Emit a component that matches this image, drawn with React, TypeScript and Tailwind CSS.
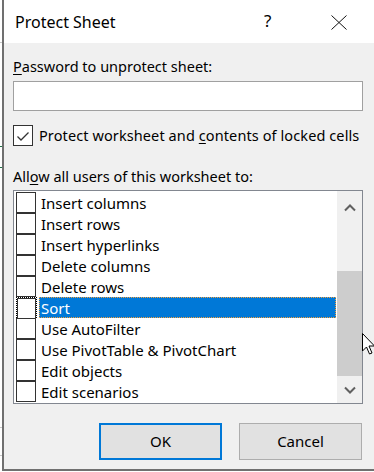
import React from "react";

const items = [
  "Insert columns",
  "Insert rows",
  "Insert hyperlinks",
  "Delete columns",
  "Delete rows",
  "Sort",
  "Use AutoFilter",
  "Use PivotTable & PivotChart",
  "Edit objects",
  "Edit scenarios",
];

function Check() {
  return (
    <svg width="16" height="16" viewBox="0 0 16 16" fill="none">
      <path d="M2.5 8.5 L6 12 L13.5 4.5" stroke="#333" strokeWidth="1.3" />
    </svg>
  );
}

function Chevron({ down }: { down?: boolean }) {
  return (
    <svg width="12" height="8" viewBox="0 0 12 8" fill="none">
      <path
        d={down ? "M1 1.5 L6 6.5 L11 1.5" : "M1 6.5 L6 1.5 L11 6.5"}
        stroke="#606060"
        strokeWidth="2"
      />
    </svg>
  );
}

export default function App() {
  return (
    <div
      className="relative w-[374px] h-[472px] overflow-hidden bg-white flex text-[#000]"
      style={{ fontFamily: '"Noto Sans", "Open Sans", sans-serif' }}
    >
      {/* spreadsheet strip behind dialog */}
      <div className="relative w-[2px] shrink-0 bg-white">
        <div className="absolute left-0 top-[42px] w-[2px] h-px bg-[#c8c8c8]" />
        <div className="absolute left-0 top-[146px] w-[2px] h-px bg-[#217346]" />
        <div className="absolute left-0 top-[167px] w-[2px] h-px bg-[#217346]" />
        <div className="absolute left-0 top-[427px] w-[2px] h-px bg-[#c8c8c8]" />
        <div className="absolute left-0 top-[455px] w-[2px] h-px bg-[#c8c8c8]" />
      </div>

      <div className="flex flex-col w-[400px] h-[471px] shrink-0 border-l-2 border-b-2 border-[#707070] bg-[#f0f0f0]">
        {/* title bar */}
        <div className="relative h-[43px] bg-white flex items-center shrink-0">
          <span className="ml-[11px] text-[16px] leading-none">Protect Sheet</span>
          <span className="absolute left-[260px] top-[12px] text-[17px] leading-none">?</span>
          <svg className="absolute left-[327px] top-[15px]" width="16" height="15" viewBox="0 0 16 15">
            <path d="M0.5 0.5 L15.5 14.5 M15.5 0.5 L0.5 14.5" stroke="#111" strokeWidth="1" />
          </svg>
        </div>

        {/* body */}
        <div className="pl-[9px] w-[359px] flex flex-col text-[14.5px]">
          <div className="mt-[13px] h-[21px] leading-[21px]">
            <span className="underline underline-offset-2">P</span>assword to unprotect sheet:
          </div>
          <div className="mt-[4px] h-[30px] bg-white border border-[#a0a0a0]" />

          <div className="mt-[14px] flex items-center h-[21px] whitespace-nowrap">
            <div className="w-[20px] h-[21px] shrink-0 border border-[#333] bg-white flex items-center justify-center">
              <Check />
            </div>
            <span className="ml-[6px] leading-[21px] tracking-[0.1px]">
              Protect worksheet and <span className="underline underline-offset-2">c</span>ontents of locked cells
            </span>
          </div>

          <div className="mt-[20px] h-[21px] leading-[21px]">
            All<span className="underline underline-offset-2">o</span>w all users of this worksheet to:
          </div>

          {/* list box */}
          <div className="mt-[3px] h-[214px] border border-[#828790] bg-white flex text-[15px]">
            <div className="flex-1 flex flex-col pt-px pl-[2px]">
              {items.map((label) => {
                const sel = label === "Sort";
                return (
                  <div key={label} className="h-[21px] flex items-start">
                    <div
                      className={
                        sel
                          ? "w-[21px] h-[21px] border border-dotted border-black flex"
                          : "w-[21px] h-[21px] flex"
                      }
                    >
                      <div className="w-[20px] h-[21px] border border-[#333] bg-white" />
                    </div>
                    <div
                      className={
                        sel
                          ? "ml-[2px] flex-1 h-[21px] leading-[21px] pl-[1px] bg-[#0078d7] text-white border border-dotted border-[#f0a040]"
                          : "ml-[2px] flex-1 h-[21px] leading-[21px] pl-[1px] border border-transparent"
                      }
                    >
                      {label}
                    </div>
                  </div>
                );
              })}
            </div>
            {/* scrollbar */}
            <div className="w-[25px] bg-[#f0f0f0] flex flex-col items-center ml-px">
              <div className="h-[32px] flex items-center justify-center pt-[2px]">
                <Chevron />
              </div>
              <div className="mt-[48px] w-[25px] h-[105px] bg-[#cdcdcd]" />
              <div className="flex-1 flex items-center justify-center">
                <Chevron down />
              </div>
            </div>
          </div>

          {/* buttons */}
          <div className="mt-[19px] flex justify-end gap-[17px] pr-[1px]">
            <button className="w-[123px] h-[37px] bg-[#e1e1e1] border-2 border-[#0078d7] text-[15px]">
              OK
            </button>
            <button className="w-[123px] h-[37px] bg-[#e1e1e1] border border-[#adadad] text-[15px]">
              Cancel
            </button>
          </div>
        </div>
      </div>

      {/* mouse cursor */}
      <svg className="absolute left-[362px] top-[333px]" width="14" height="30" viewBox="0 0 14 30">
        <path
          d="M0.5 0.5 L0.5 18 L4.5 14 L7.5 21 L10 20 L7 13 L12.5 13 Z"
          fill="white"
          stroke="black"
          strokeWidth="1"
        />
      </svg>
    </div>
  );
}
